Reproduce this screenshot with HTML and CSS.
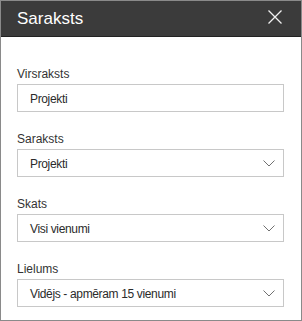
FILE: index.html
```html
<!DOCTYPE html>
<html lang="lv">
<head>
    <meta charset="UTF-8">
    <title>Saraksts</title>
    <link rel="stylesheet" href="styles.css">
</head>
<body>
    <div class="panel">
        <!-- Header -->
        <div class="header">
            <h1>Saraksts</h1>
            <button class="close" aria-label="Aizvērt">
                <svg width="14" height="14" viewBox="0 0 14 14">
                    <path d="M0.5 0.5 L13.5 13.5 M13.5 0.5 L0.5 13.5" stroke="#f0f0f0" stroke-width="1.3" fill="none" />
                </svg>
            </button>
        </div>

        <!-- Fields -->
        <div class="fields">
            <div class="field">
                <label>Virsraksts</label>
                <div class="box">Projekti</div>
            </div>
            <div class="field">
                <label>Saraksts</label>
                <div class="box select">Projekti
                    <svg class="chevron" width="12" height="7" viewBox="0 0 12 7"><path d="M0.5 0.5 L6 6 L11.5 0.5" stroke="#707070" stroke-width="1" fill="none" /></svg>
                </div>
            </div>
            <div class="field">
                <label>Skats</label>
                <div class="box select">Visi vienumi
                    <svg class="chevron" width="12" height="7" viewBox="0 0 12 7"><path d="M0.5 0.5 L6 6 L11.5 0.5" stroke="#707070" stroke-width="1" fill="none" /></svg>
                </div>
            </div>
            <div class="field">
                <label>Lielums</label>
                <div class="box select">Vidējs - apmēram 15 vienumi
                    <svg class="chevron" width="12" height="7" viewBox="0 0 12 7"><path d="M0.5 0.5 L6 6 L11.5 0.5" stroke="#707070" stroke-width="1" fill="none" /></svg>
                </div>
            </div>
        </div>
    </div>
</body>
</html>
```

FILE: styles.css
```css
body {
    margin: 0;
    font-family: "Liberation Sans", Arial, sans-serif;
    background: #ffffff;
}

.panel {
    width: 302px;
    height: 321px;
    box-sizing: border-box;
    border: 1px solid #8a8a8a;
    background: white;
}

/* Header */
.header {
    height: 35px;
    background: #3b3b3b;
    border-bottom: 1px solid #222;
    display: flex;
    align-items: center;
    justify-content: space-between;
    padding: 0 19px 0 16px;
}

    .header h1 {
        margin: 0;
        color: white;
        font-size: 17px;
        font-weight: normal;
    }

    .header .close {
        background: none;
        border: none;
        padding: 0;
        margin-top: -3px;
        width: 14px;
        height: 14px;
        display: flex;
        cursor: pointer;
    }

.fields {
    padding: 28px 17px 0 16px;
    display: flex;
    flex-direction: column;
    gap: 18px;
}

.field label {
    display: block;
    font-size: 12px;
    line-height: 18px;
    color: #333;
    margin-bottom: 1px;
}

.box {
    height: 28px;
    box-sizing: border-box;
    border: 1px solid #c8c8c8;
    padding: 2px 12px 0;
    font-size: 12px;
    letter-spacing: -0.35px;
    line-height: 24px;
    color: #2b2b2b;
    position: relative;
}

    .box .chevron {
        position: absolute;
        right: 8px;
        top: 10px;
    }
```
